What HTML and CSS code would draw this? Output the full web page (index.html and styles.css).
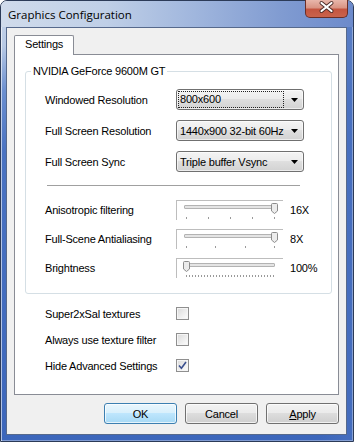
FILE: index.html
```html
<!doctype html>
<html>
  <head>
    <meta charset="utf-8">
    <meta name="viewport" content="width=device-width, initial-scale=1">
    <link rel="stylesheet" href="styles.css">
  </head>
  <body>
    <div class="window">
      <div class="titlebar">
        <span class="title">Graphics Configuration</span>
        <span class="close">
          <svg width="43" height="18" viewBox="0 0 43 18">
            <path d="M16.5 4 L26.5 12 M26.5 4 L16.5 12" stroke="#4b2a26" stroke-width="4" stroke-linecap="round"/>
            <path d="M16.5 4 L26.5 12 M26.5 4 L16.5 12" stroke="#fff" stroke-width="2.2" stroke-linecap="round"/>
          </svg>
        </span>
      </div>

      <div class="client">
        <div class="tabs"><span class="tab">Settings</span></div>

        <div class="panel">
          <fieldset class="group">
            <legend>NVIDIA GeForce 9600M GT</legend>

            <div class="field">
              <label>Windowed Resolution</label>
              <div class="combo focused">
                <span class="value">800x600</span>
                <svg class="arrow" width="7" height="4" viewBox="0 0 7 4"><path d="M0 0 H7 L3.5 4 Z" fill="#000"/></svg>
              </div>
            </div>
            <div class="field">
              <label>Full Screen Resolution</label>
              <div class="combo">
                <span class="value">1440x900 32-bit 60Hz</span>
                <svg class="arrow" width="7" height="4" viewBox="0 0 7 4"><path d="M0 0 H7 L3.5 4 Z" fill="#000"/></svg>
              </div>
            </div>
            <div class="field">
              <label>Full Screen Sync</label>
              <div class="combo">
                <span class="value">Triple buffer Vsync</span>
                <svg class="arrow" width="7" height="4" viewBox="0 0 7 4"><path d="M0 0 H7 L3.5 4 Z" fill="#000"/></svg>
              </div>
            </div>

            <div class="separator"></div>

            <div class="field slider-field">
              <label>Anisotropic filtering</label>
              <div class="slider">
                <div class="track"></div>
                <div class="ticks ticks-5"></div>
                <svg class="thumb" style="left: 94px" width="7" height="11" viewBox="0 0 7 11"><path d="M0.5 1.5 Q0.5 0.5 1.5 0.5 H5.5 Q6.5 0.5 6.5 1.5 V8 L3.5 10.5 L0.5 8 Z" fill="#ececec" stroke="#8c8c8c"/></svg>
              </div>
              <span class="amount">16X</span>
            </div>
            <div class="field slider-field">
              <label>Full-Scene Antialiasing</label>
              <div class="slider">
                <div class="track"></div>
                <div class="ticks ticks-4"></div>
                <svg class="thumb" style="left: 94px" width="7" height="11" viewBox="0 0 7 11"><path d="M0.5 1.5 Q0.5 0.5 1.5 0.5 H5.5 Q6.5 0.5 6.5 1.5 V8 L3.5 10.5 L0.5 8 Z" fill="#ececec" stroke="#8c8c8c"/></svg>
              </div>
              <span class="amount">8X</span>
            </div>
            <div class="field slider-field">
              <label>Brightness</label>
              <div class="slider">
                <div class="track"></div>
                <div class="ticks ticks-fine"></div>
                <svg class="thumb" style="left: 6px" width="7" height="11" viewBox="0 0 7 11"><path d="M0.5 1.5 Q0.5 0.5 1.5 0.5 H5.5 Q6.5 0.5 6.5 1.5 V8 L3.5 10.5 L0.5 8 Z" fill="#ececec" stroke="#8c8c8c"/></svg>
              </div>
              <span class="amount">100%</span>
            </div>
          </fieldset>

          <div class="check-field">
            <label>Super2xSal textures</label>
            <span class="check"></span>
          </div>
          <div class="check-field">
            <label>Always use texture filter</label>
            <span class="check"></span>
          </div>
          <div class="check-field">
            <label>Hide Advanced Settings</label>
            <span class="check">
              <svg width="11" height="11" viewBox="0 0 11 11"><path d="M2 5.5 L4.4 8.2 L9 2" fill="none" stroke="#3a4f8e" stroke-width="1.6"/></svg>
            </span>
          </div>
        </div>

        <div class="buttons">
          <button class="default">OK</button>
          <button>Cancel</button>
          <button><u>A</u>pply</button>
        </div>
      </div>
    </div>
  </body>
</html>
```

FILE: styles.css
```css
body {
  margin: 0;
  background: #fff;
  font-family: "Liberation Sans", Arial, sans-serif;
  font-size: 11px;
  letter-spacing: -0.2px;
  color: #000;
}
.window {
  box-sizing: border-box;
  width: 354px;
  height: 442px;
  border: 1px solid #2c3b58;
  border-radius: 7px 7px 0 0;
  padding: 0 6px 6px 5px;
  display: flex;
  flex-direction: column;
  background:
    linear-gradient(to right, rgba(70, 110, 190, 0) 0, rgba(70, 110, 190, 0) 320px, rgba(70, 110, 190, 0.85) 346px),
    linear-gradient(to bottom, #c9d6ea 0, #b7c9e5 45px, #6b8fd0 90px, #4a73c2 150px, #3c66bb 100%);
  box-shadow: inset 1px 1px 0 rgba(255, 255, 255, 0.6), inset -1px -1px 0 rgba(255, 255, 255, 0.35);
}
.titlebar {
  display: flex;
  align-items: flex-start;
  height: 26px;
  margin: 0 -6px 0 -5px;
  padding-left: 7px;
  border-radius: 6px 6px 0 0;
  background: linear-gradient(to right, #d0dbeb 0%, #bfcfe7 30%, #a0b6dd 55%, #809bd1 80%, #6c8acb 100%);
}
.title {
  font-family: "Open Sans", "Liberation Sans", sans-serif;
  font-size: 11.5px;
  letter-spacing: 0;
  line-height: 24px;
  padding-top: 2px;
}
.close {
  margin: -1px 5px 0 auto;
  width: 43px;
  height: 18px;
  box-sizing: border-box;
  border: 1px solid #6a2e27;
  border-top: 0;
  border-radius: 0 0 5px 5px;
  background: linear-gradient(to bottom, #e8b7ab 0%, #d99484 45%, #c45540 55%, #c9634c 100%);
}
.close svg {
  display: block;
  margin: -1px 0 0 -1px;
}
.client {
  flex: 1;
  display: flex;
  flex-direction: column;
  border: 1px solid #56698c;
  background: #f0f0f0;
  padding: 7px 7px 0 7px;
}
.tabs {
  display: flex;
  position: relative;
  z-index: 1;
  margin-bottom: -1px;
}
.tab {
  height: 17px;
  line-height: 17px;
  padding: 0 10px 2px 10px;
  border: 1px solid #898c95;
  border-bottom: 0;
  border-radius: 2px 2px 0 0;
  background: #fff;
}
.panel {
  box-sizing: border-box;
  height: 341px;
  border: 1px solid #898c95;
  background: #fff;
}
.group {
  margin: 10px 13px 0 10px;
  padding: 11px 14px 15px 19px;
  border: 1px solid #d5dfe5;
  border-radius: 3px;
}
.group legend {
  padding: 0 2px;
  margin-left: -14px;
  line-height: 13px;
}
.field {
  display: flex;
  align-items: center;
  height: 21px;
}
.field + .field {
  margin-top: 10px;
}
.field label,
.check-field label {
  width: 131px;
  flex: none;
}
.combo {
  box-sizing: border-box;
  display: flex;
  align-items: center;
  width: 128px;
  height: 21px;
  padding: 0 5px 0 3px;
  border: 1px solid #707070;
  border-radius: 3px;
  background: linear-gradient(to bottom, #f4f4f4 0%, #ececec 45%, #dfdfdf 50%, #d2d2d2 100%);
  box-shadow: inset 0 0 0 1px rgba(255, 255, 255, 0.6);
}
.combo .value {
  flex: 1;
  white-space: nowrap;
}
.combo.focused {
  padding-left: 1px;
}
.combo.focused .value {
  border: 1px dotted #222;
  padding: 1px 0 1px 1px;
  margin-right: 7px;
  line-height: 13px;
}
.separator {
  width: 253px;
  margin: 13px 0 13px 2px;
  border-top: 1px solid #a0a0a0;
  border-bottom: 1px solid #fff;
}
.slider-field {
  height: 20px;
}
.slider-field + .slider-field {
  margin-top: 9px;
}
.slider {
  position: relative;
  box-sizing: border-box;
  width: 107px;
  height: 20px;
  padding: 4px 8px 0 7px;
  border-top: 1px solid #bdbdbd;
  border-left: 1px solid #bdbdbd;
}
.track {
  height: 2px;
  border: 1px solid #b3b3b3;
  border-radius: 1px;
  background: #e4e4e4;
}
.ticks {
  height: 2px;
  margin: 8px 0 0 2px;
  width: 89px;
}
.ticks-5 {
  background: repeating-linear-gradient(to right, #9a9a9a 0 1px, transparent 1px 22px);
}
.ticks-4 {
  background: repeating-linear-gradient(to right, #9a9a9a 0 1px, transparent 1px 29.33px);
}
.ticks-fine {
  background: repeating-linear-gradient(to right, #9a9a9a 0 1px, transparent 1px 3px);
}
.thumb {
  position: absolute;
  top: 2px;
}
.amount {
  margin-left: 7px;
}
.check-field {
  display: flex;
  align-items: center;
  height: 13px;
  padding-left: 30px;
  margin-top: 13px;
}
.check {
  box-sizing: border-box;
  width: 13px;
  height: 13px;
  border: 1px solid #8f8f8f;
  background: linear-gradient(135deg, #d9d9d9 0%, #f3f3f3 70%, #fdfdfd 100%);
  box-shadow: inset 0 0 0 1px #f5f5f5;
}
.check svg {
  display: block;
}
.buttons {
  display: flex;
  justify-content: flex-end;
  gap: 8px;
  margin-top: 8px;
}
.buttons button {
  font: inherit;
  letter-spacing: inherit;
  color: #000;
  width: 73px;
  height: 21px;
  padding: 0;
  border: 1px solid #707070;
  border-radius: 3px;
  background: linear-gradient(to bottom, #f2f2f2 0%, #ebebeb 45%, #dddddd 50%, #cfcfcf 100%);
  box-shadow: inset 0 0 0 1px rgba(255, 255, 255, 0.7);
}
.buttons button.default {
  border-color: #3c7fb1;
  background: linear-gradient(to bottom, #eaf6fd 0%, #d9f0fc 45%, #bee6fd 50%, #a7d9f5 100%);
}
```
